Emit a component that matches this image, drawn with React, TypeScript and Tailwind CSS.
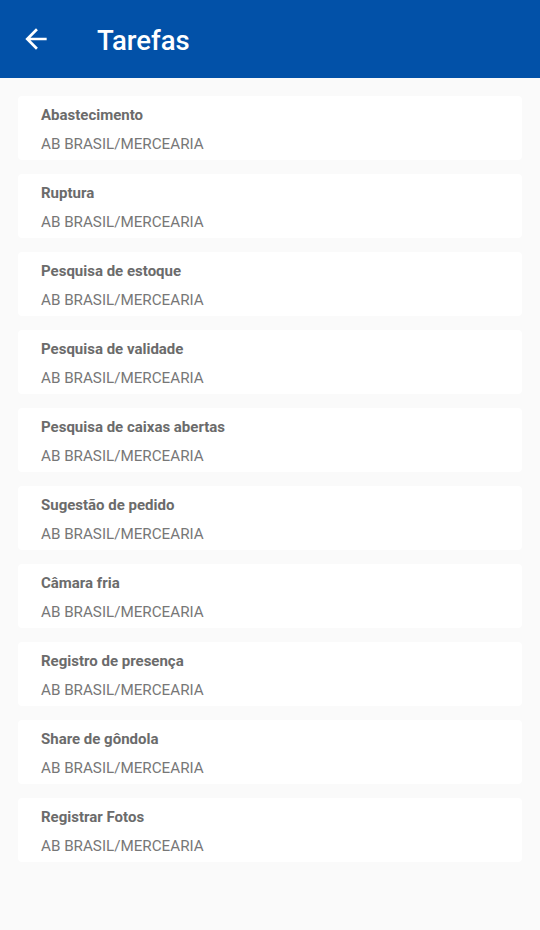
const tasks = [
  'Abastecimento',
  'Ruptura',
  'Pesquisa de estoque',
  'Pesquisa de validade',
  'Pesquisa de caixas abertas',
  'Sugestão de pedido',
  'Câmara fria',
  'Registro de presença',
  'Share de gôndola',
  'Registrar Fotos',
];

function ArrowBack() {
  return (
    <svg viewBox="0 0 24 24" className="w-8 h-8" fill="white">
      <path d="M20 11H7.83l5.59-5.59L12 4l-8 8 8 8 1.41-1.41L7.83 13H20v-2z" />
    </svg>
  );
}

export default function App() {
  return (
    <div className="min-h-[930px] bg-[#fafafa] font-['Roboto',sans-serif]">
      {/* Header */}
      <div className="h-[78px] bg-[#0251a8] flex items-center">
        <button className="ml-[20px] mt-[-1px]">
          <ArrowBack />
        </button>
        <h1 className="ml-[45px] mt-[3px] text-[27.5px] font-medium text-white">Tarefas</h1>
      </div>

      {/* Task list */}
      <div className="px-[18px] pt-[18px] flex flex-col gap-[14px]">
        {tasks.map((t) => (
          <div key={t} className="bg-white rounded-sm h-[64px] px-[23px] pt-[9px]">
            <div className="text-[15px] leading-5 font-bold text-[#6b6b6b]">{t}</div>
            <div className="mt-[9px] text-[15.2px] leading-5 text-[#777]">AB BRASIL/MERCEARIA</div>
          </div>
        ))}
      </div>
    </div>
  );
}
